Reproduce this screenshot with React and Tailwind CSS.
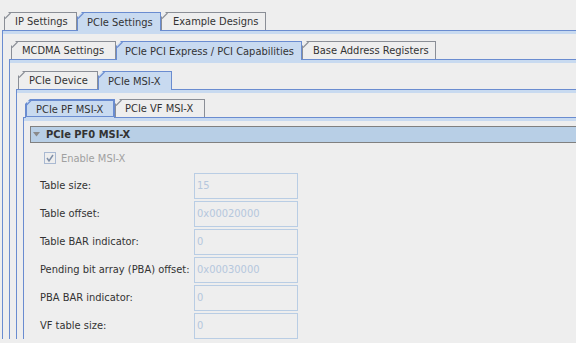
function Tab({ label, className, selected, focused }) {
  return (
    <div
      className={`relative flex shrink-0 items-center border-l border-r border-t [clip-path:polygon(5px_0,100%_0,100%_100%,0_100%,0_5px)] ${
        selected
          ? "z-10 -mb-px h-[19px] border-[#6a8cd0] bg-[#c8daf0]"
          : "h-[18px] border-[#8a8e96] bg-[#eeeeee]"
      } ${className}`}
    >
      <svg className="absolute left-0 top-0 h-[6px] w-[6px]" viewBox="0 0 6 6">
        <line x1="0" y1="5.5" x2="5.5" y2="0" stroke={selected ? "#6a8cd0" : "#8a8e96"} strokeWidth="1.2" />
      </svg>
      {focused && (
        <div className="absolute inset-x-0 top-0 bottom-px border border-[#6a8cd0]" />
      )}
      <span className="whitespace-nowrap leading-none">{label}</span>
    </div>
  );
}

function Panel({ children, className }) {
  return (
    <div className="border-l border-t border-[#6a8cd0]">
      <div className="h-[3px] bg-[#c8daf0]" />
      <div className={className}>{children}</div>
    </div>
  );
}

const rows = [
  { label: "Table size:", value: "15" },
  { label: "Table offset:", value: "0x00020000" },
  { label: "Table BAR indicator:", value: "0" },
  { label: "Pending bit array (PBA) offset:", value: "0x00030000" },
  { label: "PBA BAR indicator:", value: "0" },
  { label: "VF table size:", value: "0" },
];

export default function App() {
  return (
    <div className="h-[343px] w-full overflow-hidden bg-[#eeeeee] pl-[2px] pt-[12px] font-['DejaVu_Sans_Condensed',sans-serif] text-[11px] text-[#333333]">
      {/* top level tabs */}
      <div className="flex items-end pl-[2px]">
        <Tab label="IP Settings" className="w-[73px] pl-[10px]" />
        <Tab label="PCIe Settings" selected className="w-[84px] pl-[9px]" />
        <Tab label="Example Designs" className="w-[105px] pl-[11px]" />
      </div>
      <Panel className="pl-[6px] pt-[7px]">
        <div className="flex items-end pl-[2px]">
          <Tab label="MCDMA Settings" className="w-[105px] pl-[10px]" />
          <Tab label="PCIe PCI Express / PCI Capabilities" selected className="w-[186px] pl-[8px]" />
          <Tab label="Base Address Registers" className="w-[134px] pl-[10px]" />
        </div>
        <Panel className="pl-[6px] pt-[8px]">
          <div className="flex items-end pl-[2px]">
            <Tab label="PCIe Device" className="w-[80px] pl-[10px]" />
            <Tab label="PCIe MSI-X" selected className="w-[74px] pl-[9px]" />
          </div>
          <Panel className="pl-[6px] pt-[6px]">
            <div className="flex items-end pl-[2px]">
              <Tab label="PCIe PF MSI-X" selected focused className="w-[90px] pl-[10px]" />
              <Tab label="PCIe VF MSI-X" className="w-[90px] pl-[9px]" />
            </div>
            <Panel className="pt-[5px]">
              {/* collapsible section header */}
              <div className="ml-[6px] flex h-[17px] items-center gap-[6px] border-b border-l border-t border-[#808080] bg-[#b8cfe6] pl-[2px]">
                <svg className="h-[5px] w-[7px]" viewBox="0 0 7 5">
                  <polygon points="0,0 7,0 3.5,4.5" fill="#8a8a8a" />
                </svg>
                <span className="font-bold leading-none">PCIe PF0 MSI-X</span>
              </div>

              <div className="mt-[9px] flex items-center gap-[5px] pl-[20px]">
                <div className="flex h-[12px] w-[12px] items-center justify-center border border-[#a9b9d2] bg-[#eeeeee]">
                  <svg className="h-[10px] w-[10px]" viewBox="0 0 10 10">
                    <polyline points="2,5 4,8 8,2" fill="none" stroke="#7f8fa8" strokeWidth="1.5" />
                  </svg>
                </div>
                <span className="leading-none text-[#a0a0a0]">Enable MSI-X</span>
              </div>

              <div className="mt-[9px] grid grid-cols-[154px_104px] gap-y-[2px] pl-[16px]">
                {rows.map((r) => (
                  <div key={r.label} className="contents">
                    <div className="flex h-[26px] items-center whitespace-nowrap">{r.label}</div>
                    <div className="flex h-[26px] items-center border border-[#b9cde4] pl-[2px] text-[#b5c7dd]">
                      {r.value}
                    </div>
                  </div>
                ))}
              </div>
            </Panel>
          </Panel>
        </Panel>
      </Panel>
    </div>
  );
}
